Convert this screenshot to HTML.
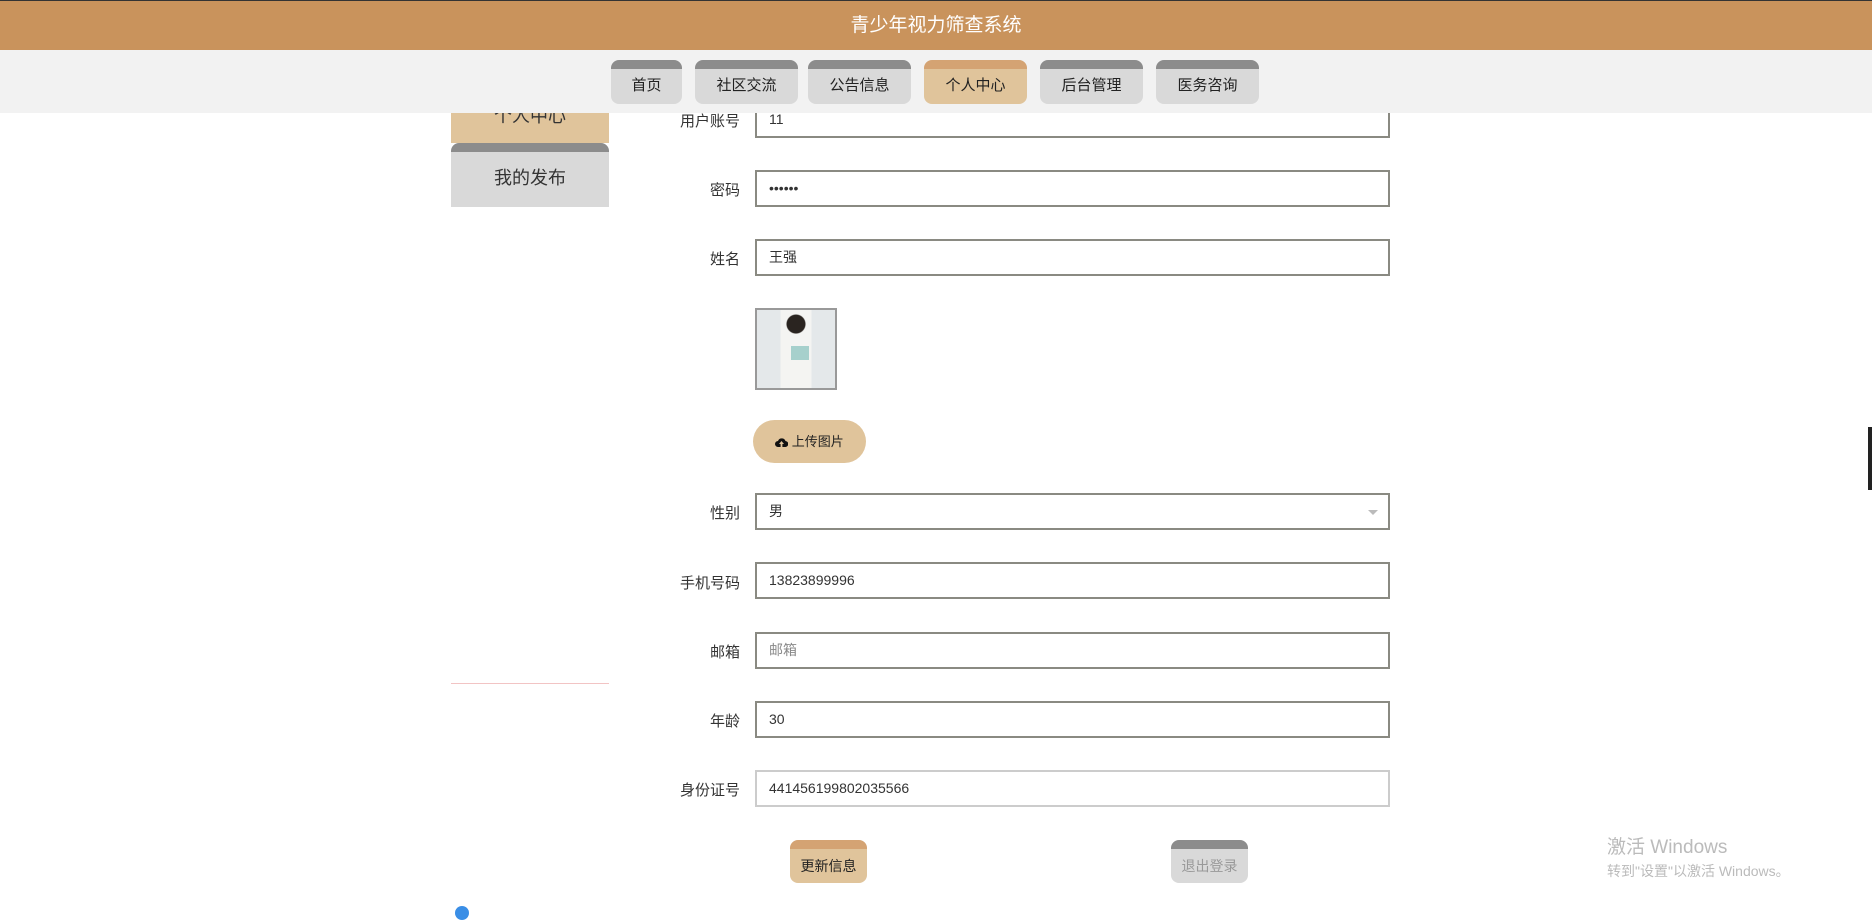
<!DOCTYPE html>
<html><head><meta charset="utf-8"><style>
*{box-sizing:border-box;margin:0;padding:0}
body{width:1872px;height:914px;overflow:hidden;background:#fff;font-family:"Liberation Sans","Noto Sans CJK SC",sans-serif;position:relative;color:#333}
.hdr{position:absolute;left:0;top:0;width:1872px;height:50px;background:#c9935c;border-top:1px solid #333;color:#fff;font-size:19px;text-align:center;line-height:50px}
.nav{position:absolute;left:0;top:50px;width:1872px;height:63px;background:#f2f2f2;z-index:2}
.tab{position:absolute;top:10px;height:44px;background:#d9d9d9;border-top:9px solid #8c8c8c;border-radius:8px;text-align:center;font-size:15px;line-height:34px;color:#222}
.tab.on{background:#e0c49b;border-top-color:#d4a373}
.side{position:absolute;left:451px;width:158px;text-align:center;font-size:18px;color:#333}
.lbl{position:absolute;right:1132px;font-size:15px;color:#333;text-align:right}
.inp{position:absolute;left:755px;width:635px;height:37px;border:2px solid #8a8a82;font-size:14px;padding-left:12px;line-height:33px;color:#333;background:#fff}
.btn{position:absolute;top:840px;width:77px;height:43px;border-top:9px solid #d4a373;border-radius:8px;background:#e0c49b;font-size:14px;text-align:center;line-height:34px;color:#222}
</style></head><body>
<div class="hdr">青少年视力筛查系统</div>
<div class="nav">
<div class="tab" style="left:611px;width:71px">首页</div>
<div class="tab" style="left:695px;width:103px">社区交流</div>
<div class="tab" style="left:808px;width:103px">公告信息</div>
<div class="tab on" style="left:924px;width:103px">个人中心</div>
<div class="tab" style="left:1040px;width:103px">后台管理</div>
<div class="tab" style="left:1156px;width:103px">医务咨询</div>
</div>
<div class="side" style="top:90px;height:53px;background:#e0c49b;line-height:53px">个人中心</div>
<div class="side" style="top:143px;height:64px;background:#d9d9d9;border-top:9px solid #8c8c8c;border-radius:8px 8px 0 0;line-height:52px">我的发布</div>
<div style="position:absolute;left:451px;top:683px;width:158px;height:1px;background:#f2c4c4"></div>

<div class="lbl" style="top:110px">用户账号</div><div class="inp" style="top:101px">11</div>
<div class="lbl" style="top:179px">密码</div><div class="inp" style="top:170px">••••••</div>
<div class="lbl" style="top:248px">姓名</div><div class="inp" style="top:239px">王强</div>
<div style="position:absolute;left:755px;top:308px;width:82px;height:82px;border:2px solid #999;background:radial-gradient(circle at 50% 18%,#2a2420 0,#2a2420 9px,transparent 10px),linear-gradient(90deg,#e4e8ea 0,#e4e8ea 30%,#f4f4f2 30%,#f4f4f2 70%,#e4e8ea 70%);"><div style="position:absolute;left:34px;top:36px;width:18px;height:14px;background:#a6d0cc"></div></div>
<div style="position:absolute;left:753px;top:420px;width:113px;height:43px;border-radius:22px;background:#e0c49b;font-size:13px;line-height:43px;text-align:center;color:#222"><svg width="13" height="10" viewBox="0 0 13 10" style="vertical-align:-1px"><path d="M3 10a3 3 0 0 1 0-6a4 4 0 0 1 7.5 0a3 3 0 0 1-.5 6z" fill="#111"/><path d="M6.5 4l-2.5 3h1.6v3h1.8v-3h1.6z" fill="#e0c49b"/></svg> 上传图片</div>
<div class="lbl" style="top:502px">性别</div><div class="inp" style="top:493px">男<span style="position:absolute;right:10px;top:15px;border:5px solid transparent;border-top-color:#bbb"></span></div>
<div class="lbl" style="top:572px">手机号码</div><div class="inp" style="top:562px">13823899996</div>
<div class="lbl" style="top:641px">邮箱</div><div class="inp" style="top:632px;color:#888">邮箱</div>
<div class="lbl" style="top:710px">年龄</div><div class="inp" style="top:701px">30</div>
<div class="lbl" style="top:779px">身份证号</div><div class="inp" style="top:770px;border-color:#ccc">441456199802035566</div>
<div class="btn" style="left:790px">更新信息</div>
<div class="btn" style="left:1171px;border-top-color:#8c8c8c;background:#d9d9d9;color:#999">退出登录</div>
<div style="position:absolute;left:1607px;top:832px;font-size:19px;color:#bbb">激活 Windows</div>
<div style="position:absolute;left:1607px;top:861px;font-size:14px;color:#bbb">转到"设置"以激活 Windows。</div>
<div style="position:absolute;left:1868px;top:427px;width:4px;height:63px;background:#222"></div>
<div style="position:absolute;left:455px;top:906px;width:14px;height:14px;border-radius:50%;background:#3a8ee6"></div>
</body></html>
